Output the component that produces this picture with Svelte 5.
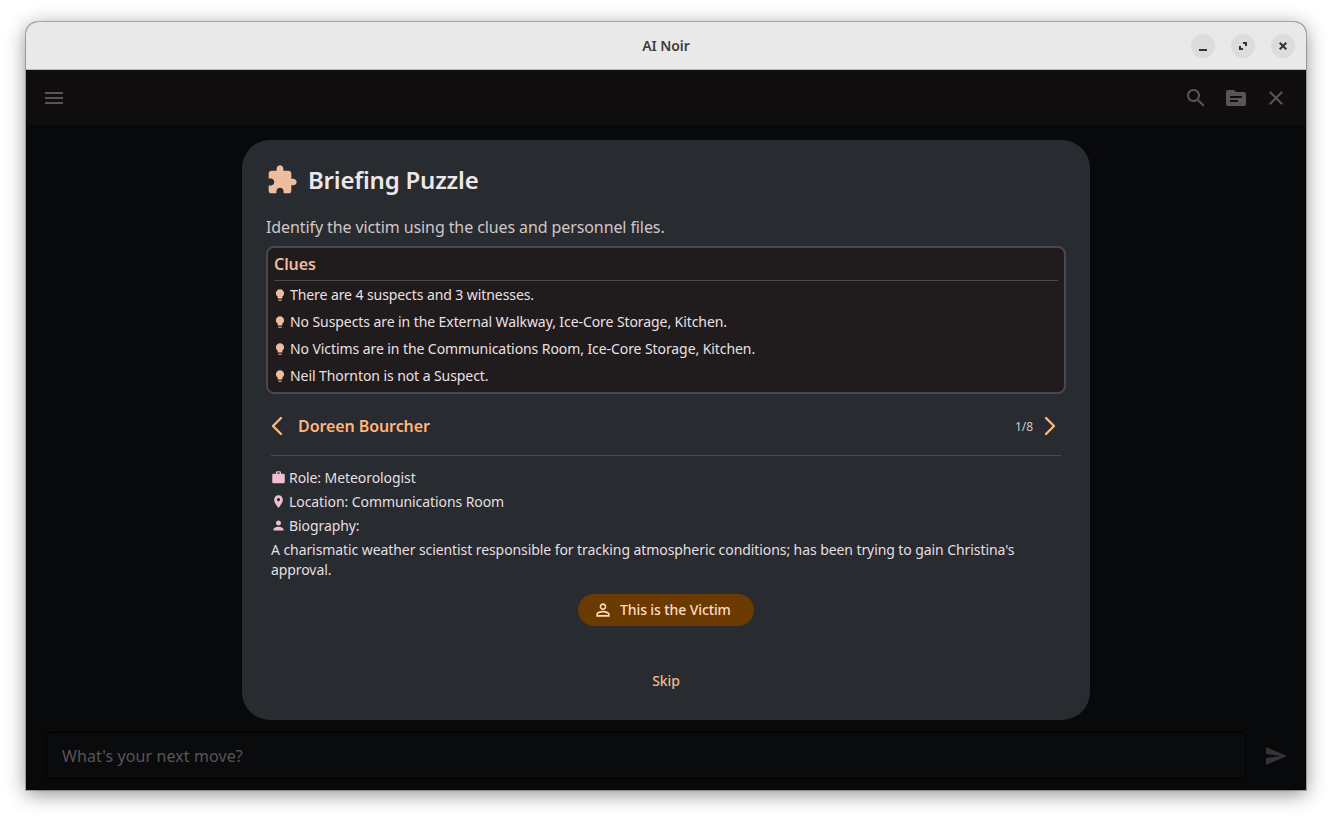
<script>
  const clues = [
    'There are 4 suspects and 3 witnesses.',
    'No Suspects are in the External Walkway, Ice-Core Storage, Kitchen.',
    'No Victims are in the Communications Room, Ice-Core Storage, Kitchen.',
    'Neil Thornton is not a Suspect.'
  ];
  const bulb = 'M9 21c0 .55.45 1 1 1h4c.55 0 1-.45 1-1v-1H9v1zm3-19C8.14 2 5 5.14 5 9c0 2.38 1.19 4.47 3 5.74V17c0 .55.45 1 1 1h6c.55 0 1-.45 1-1v-2.26c1.81-1.27 3-3.36 3-5.74 0-3.86-3.14-7-7-7z';
</script>

<div class="window">
  <header class="titlebar">
    <span class="title">AI Noir</span>
    <div class="controls">
      <span class="ctl">
        <svg viewBox="0 0 24 24" width="24" height="24"><rect x="8" y="15" width="8" height="2" /></svg>
      </span>
      <span class="ctl">
        <svg viewBox="0 0 24 24" width="24" height="24"><path d="M12 8h4v4h-2v-2h-2zM8 12h2v2h2v2H8z" /></svg>
      </span>
      <span class="ctl">
        <svg viewBox="0 0 24 24" width="24" height="24"><path d="M9.400 8L12 10.600 14.600 8 16 9.400 13.400 12 16 14.600 14.600 16 12 13.400 9.400 16 8 14.600 10.600 12 8 9.400z" /></svg>
      </span>
    </div>
  </header>

  <div class="appbar">
    <svg class="bar-icon" viewBox="0 0 24 24"><path d="M3 18h18v-2H3v2zm0-5h18v-2H3v2zm0-7v2h18V6H3z" /></svg>
    <div class="bar-right">
      <svg class="bar-icon" viewBox="0 0 24 24"><path d="M15.500 14h-.79l-.28-.27C15.410 12.590 16 11.110 16 9.500 16 5.910 13.090 3 9.500 3S3 5.910 3 9.500 5.910 16 9.500 16c1.610 0 3.090-.59 4.230-1.570l.27.28v.79l5 4.990L20.490 19l-4.990-5zm-6 0C7.010 14 5 11.990 5 9.500S7.010 5 9.500 5 14 7.010 14 9.500 11.990 14 9.500 14z" /></svg>
      <svg class="bar-icon" viewBox="0 0 24 24"><path d="M20 6h-8l-2-2H4c-1.100 0-1.990.9-1.990 2L2 18c0 1.100.9 2 2 2h16c1.100 0 2-.9 2-2V8c0-1.100-.9-2-2-2zm-6 10H6v-2h8v2zm4-4H6v-2h12v2z" /></svg>
      <svg class="bar-icon" viewBox="0 0 24 24"><path d="M19 6.410L17.590 5 12 10.590 6.410 5 5 6.410 10.590 12 5 17.590 6.410 19 12 13.410 17.590 19 19 17.590 13.410 12z" /></svg>
    </div>
  </div>

  <main class="content">
    <section class="dialog">
      <div class="dialog-head">
        <svg class="puzzle" viewBox="0 0 24 24"><path d="M20.500 11H19V7c0-1.100-.9-2-2-2h-4V3.500C13 2.120 11.880 1 10.500 1S8 2.120 8 3.500V5H4c-1.100 0-1.990.9-1.990 2v3.800H3.500c1.490 0 2.700 1.210 2.700 2.700s-1.210 2.700-2.700 2.700H2V20c0 1.100.9 2 2 2h3.800v-1.500c0-1.490 1.210-2.700 2.700-2.700 1.490 0 2.700 1.210 2.700 2.700V22H17c1.100 0 2-.9 2-2v-4h1.500c1.380 0 2.500-1.120 2.500-2.500S21.880 11 20.500 11z" /></svg>
        <h2>Briefing Puzzle</h2>
      </div>
      <p class="intro">Identify the victim using the clues and personnel files.</p>

      <div class="clues">
        <h3>Clues</h3>
        <ul>
          {#each clues as clue}
            <li>
              <svg viewBox="0 0 24 24"><path d={bulb} /></svg>
              {clue}
            </li>
          {/each}
        </ul>
      </div>

      <div class="pager">
        <svg class="chev" viewBox="0 0 12 20"><polyline points="10,2 2,10 10,18" /></svg>
        <span class="name">Doreen Bourcher</span>
        <span class="count">1/8</span>
        <svg class="chev" viewBox="0 0 12 20"><polyline points="2,2 10,10 2,18" /></svg>
      </div>

      <div class="person">
        <div class="fact">
          <svg viewBox="0 0 24 24"><path d="M20 6h-4V4c0-1.110-.89-2-2-2h-4c-1.110 0-2 .89-2 2v2H4c-1.110 0-1.990.89-1.990 2L2 19c0 1.110.89 2 2 2h16c1.110 0 2-.89 2-2V8c0-1.110-.89-2-2-2zm-6 0h-4V4h4v2z" /></svg>
          Role: Meteorologist
        </div>
        <div class="fact">
          <svg viewBox="0 0 24 24"><path d="M12 2C8.130 2 5 5.130 5 9c0 5.250 7 13 7 13s7-7.750 7-13c0-3.870-3.130-7-7-7zm0 9.500c-1.380 0-2.500-1.120-2.500-2.500s1.120-2.500 2.500-2.500 2.500 1.120 2.500 2.500-1.120 2.500-2.500 2.500z" /></svg>
          Location: Communications Room
        </div>
        <div class="fact">
          <svg viewBox="0 0 24 24"><path d="M12 12c2.210 0 4-1.790 4-4s-1.790-4-4-4-4 1.790-4 4 1.790 4 4 4zm0 2c-2.670 0-8 1.340-8 4v2h16v-2c0-2.660-5.330-4-8-4z" /></svg>
          Biography:
        </div>
        <p class="bio">A charismatic weather scientist responsible for tracking atmospheric conditions; has been trying to gain Christina's approval.</p>
      </div>

      <button class="victim">
        <svg viewBox="0 0 24 24"><path d="M12 5.900c1.160 0 2.100.94 2.100 2.100s-.94 2.100-2.100 2.100S9.900 9.160 9.900 8s.94-2.100 2.100-2.100m0 9c2.970 0 6.100 1.460 6.100 2.100v1.100H5.900V17c0-.64 3.130-2.100 6.100-2.100M12 4C9.790 4 8 5.790 8 8s1.790 4 4 4 4-1.790 4-4-1.790-4-4-4zm0 9c-2.670 0-8 1.340-8 4v3h16v-3c0-2.660-5.330-4-8-4z" /></svg>
        This is the Victim
      </button>

      <button class="skip">Skip</button>
    </section>
  </main>

  <footer class="composer">
    <div class="input">What's your next move?</div>
    <svg class="send" viewBox="0 0 24 24"><path d="M2.010 21L23 12 2.010 3 2 10l15 2-15 2z" /></svg>
  </footer>
</div>

<style>
  :global(body) {
    margin: 0;
    background: #fff;
    min-height: 819px;
  }
  .window {
    box-sizing: border-box;
    width: 1280px;
    height: 768px;
    margin: 22px 0 0 26px;
    display: flex;
    flex-direction: column;
    border-radius: 12px 12px 0 0;
    overflow: hidden;
    background: #08090b;
    box-shadow: 0 0 0 1px rgba(0,0,0,0.25), 0 4px 20px rgba(0,0,0,0.45);
    font-family: "Noto Sans", sans-serif;
    color: #e6e0e3;
    font-size: 14px;
    letter-spacing: -0.08px;
  }
  .titlebar {
    position: relative;
    flex: none;
    height: 48px;
    box-sizing: border-box;
    background: #e9e9e9;
    border-bottom: 1px solid #b8b8b8;
    display: flex;
    align-items: center;
    justify-content: center;
  }
  .title {
    font-size: 14px;
    font-weight: 600;
    color: #3d3d3d;
  }
  .controls {
    position: absolute;
    right: 11px;
    top: 12px;
    display: flex;
    gap: 16px;
  }
  .ctl {
    width: 24px;
    height: 24px;
    border-radius: 50%;
    background: #dcdcdc;
  }
  .ctl svg {
    display: block;
    fill: #333;
  }
  .appbar {
    flex: none;
    height: 55px;
    padding: 0 18px 0 16px;
    background: #0f0d0e;
    display: flex;
    align-items: center;
    justify-content: space-between;
  }
  .bar-right {
    display: flex;
    gap: 16px;
  }
  .bar-icon {
    width: 24px;
    height: 24px;
    display: block;
    fill: #5a5457;
  }
  .content {
    flex: 1;
    min-height: 0;
    display: flex;
    justify-content: center;
    padding-top: 15px;
  }
  .dialog {
    box-sizing: border-box;
    width: 848px;
    height: 580px;
    padding: 24px 24px 16px;
    border-radius: 28px;
    background: #282b30;
    display: flex;
    flex-direction: column;
  }
  .dialog-head {
    display: flex;
    align-items: center;
    gap: 10px;
    height: 32px;
  }
  .puzzle {
    width: 32px;
    height: 32px;
    fill: #efbc9f;
  }
  h2 {
    margin: 0;
    font-size: 24px;
    line-height: 32px;
    font-weight: 600;
    letter-spacing: -0.2px;
    color: #efe6e9;
  }
  .intro {
    margin: 19px 0 7px;
    font-size: 16px;
    line-height: 24px;
    letter-spacing: -0.1px;
    color: #d0c6c9;
  }
  .clues {
    box-sizing: border-box;
    height: 148px;
    border: 2px solid #4f4649;
    border-radius: 8px;
    background: #201b1d;
    padding: 4px 6px;
  }
  h3 {
    margin: 0;
    padding-bottom: 4px;
    border-bottom: 1px solid #4f4649;
    font-size: 16px;
    line-height: 24px;
    font-weight: 600;
    color: #efbc9f;
  }
  ul {
    list-style: none;
    margin: 0;
    padding: 0;
  }
  li {
    height: 27px;
    display: flex;
    align-items: center;
    gap: 3px;
    margin-left: -1px;
    font-size: 14px;
    color: #ece0e2;
  }
  li svg {
    width: 14px;
    height: 14px;
    fill: #efbc9f;
    flex: none;
  }
  .pager {
    margin: 16px 5px 0;
    padding: 0 5px 13px 0;
    height: 32px;
    display: flex;
    align-items: center;
    gap: 15px;
    border-bottom: 1px solid #4f4649;
  }
  .chev {
    width: 12px;
    height: 20px;
    fill: none;
    stroke: #ffb77a;
    stroke-width: 2.400;
    stroke-linecap: round;
    stroke-linejoin: round;
    flex: none;
  }
  .name {
    flex: 1;
    font-size: 16px;
    font-weight: 600;
    color: #ffb77a;
  }
  .count {
    font-size: 12px;
    color: #d0c6c9;
    margin-right: -4px;
  }
  .person {
    margin: 9px 5px 0;
    color: #e6dfe1;
  }
  .fact {
    height: 24px;
    display: flex;
    align-items: center;
    gap: 3px;
  }
  .fact svg {
    width: 15px;
    height: 15px;
    fill: #efc0cf;
    flex: none;
  }
  .bio {
    margin: 3px 0 0;
    line-height: 20px;
  }
  .victim {
    align-self: center;
    margin-top: 14px;
    height: 32px;
    width: 176px;
    padding: 0 0 2px 15px;
    border: 0;
    border-radius: 16px;
    background: #6b3a00;
    color: #ffdcc0;
    font: 500 14px "Noto Sans", sans-serif;
    letter-spacing: -0.1px;
    display: flex;
    align-items: center;
    gap: 7px;
  }
  .victim svg {
    width: 20px;
    height: 20px;
    fill: #ffdcc0;
    flex: none;
    margin-top: 2px;
  }
  .skip {
    align-self: center;
    margin-top: auto;
    margin-bottom: 6px;
    border: 0;
    padding: 8px 12px;
    background: none;
    color: #efb78f;
    font: 500 14px "Noto Sans", sans-serif;
    letter-spacing: -0.1px;
  }
  .composer {
    flex: none;
    height: 58px;
    box-sizing: border-box;
    padding: 0 18px 11px 20px;
    display: flex;
    align-items: center;
    gap: 18px;
  }
  .input {
    box-sizing: border-box;
    width: 1200px;
    height: 47px;
    padding: 0 15px;
    border: 1px solid #000;
    border-radius: 4px;
    display: flex;
    align-items: center;
    font-size: 16px;
    letter-spacing: 0.1px;
    color: #5a5457;
    background: #0a0b0d;
  }
  .send {
    width: 24px;
    height: 24px;
    fill: #343436;
  }
</style>
